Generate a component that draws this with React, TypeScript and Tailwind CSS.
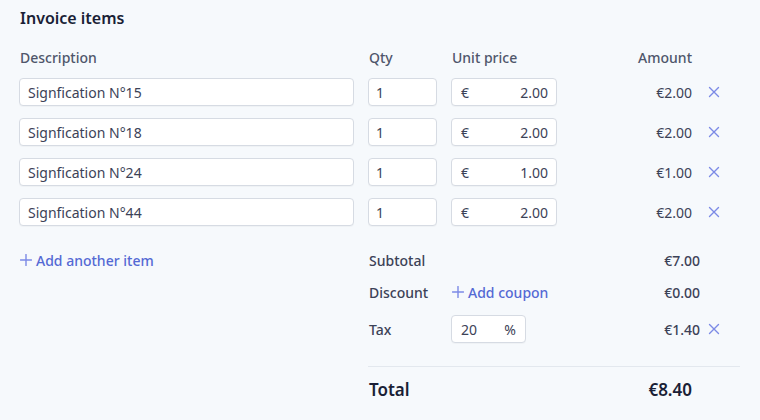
import React from "react";

const font = { fontFamily: '"Noto Sans", "Open Sans", sans-serif' };

function XIcon() {
  return (
    <svg width="12" height="12" viewBox="0 0 12 12" className="block">
      <path d="M1.5 1.5 L10.5 10.5 M10.5 1.5 L1.5 10.5" stroke="#7c8ae6" strokeWidth="1.4" strokeLinecap="round" fill="none" />
    </svg>
  );
}

function PlusIcon() {
  return (
    <svg width="12" height="12" viewBox="0 0 12 12" className="block">
      <path d="M6 0.5 V11.5 M0.5 6 H11.5" stroke="#7c8ae6" strokeWidth="1.4" strokeLinecap="round" fill="none" />
    </svg>
  );
}

const rows = [
  { d: "Signfication N°15", q: "1", p: "2.00", a: "€2.00" },
  { d: "Signfication N°18", q: "1", p: "2.00", a: "€2.00" },
  { d: "Signfication N°24", q: "1", p: "1.00", a: "€1.00" },
  { d: "Signfication N°44", q: "1", p: "2.00", a: "€2.00" },
];

const inputBox =
  "h-[28px] bg-white border border-[#d6dbe3] rounded-[4px] flex items-center text-[14px] text-[#3c4257] shadow-[0_1px_1px_rgba(0,0,0,0.03)]";

const headCls = "h-[20px] leading-[24px] text-[14px] font-medium text-[#4f566b]";

export default function App() {
  return (
    <div className="w-[760px] h-[420px] bg-[#f6f9fc] overflow-hidden pl-[19px] pt-[6px]" style={font}>
      <div className="h-[24px] leading-[24px] text-[16px] font-semibold text-[#1a1f36] pl-[1px]">Invoice items</div>

      <div className="mt-[16px] grid grid-cols-[335px_69px_106px_121px_auto] gap-x-[14px] gap-y-[12px] items-center">
        <div className={headCls + " pl-[1px]"}>Description</div>
        <div className={headCls + " pl-[1px]"}>Qty</div>
        <div className={headCls + " pl-[1px]"}>Unit price</div>
        <div className={headCls + " text-right"}>Amount</div>
        <div />
        {rows.map((r, i) => (
          <React.Fragment key={i}>
            <div className={inputBox + " pl-[8px]"}>{r.d}</div>
            <div className={inputBox + " pl-[7px]"}>{r.q}</div>
            <div className={inputBox + " pl-[9px] pr-[8px] justify-between"}>
              <span>€</span>
              <span>{r.p}</span>
            </div>
            <div className="text-[14px] text-[#3c4257] text-right">{r.a}</div>
            <div className="pl-[2px]">
              <XIcon />
            </div>
          </React.Fragment>
        ))}
      </div>

      <div className="flex mt-[24px]">
        <div className="w-[349px] pl-[1px]">
          <div className="h-[20px] flex items-center gap-[4px] text-[14px] font-medium text-[#5469d4]">
            <PlusIcon />
            <span>Add another item</span>
          </div>
        </div>
        <div className="w-[372px]">
          <div className="h-[20px] flex items-center text-[14px] font-medium text-[#3c4257]">
            <div className="w-[83px] pl-[1px]">Subtotal</div>
            <div className="flex-1" />
            <div className="text-right">€7.00</div>
            <div className="w-[40px]" />
          </div>
          <div className="mt-[12px] h-[20px] flex items-center text-[14px] font-medium text-[#3c4257]">
            <div className="w-[83px] pl-[1px]">Discount</div>
            <div className="flex-1 flex items-center gap-[4px] text-[#5469d4] pl-[1px]">
              <PlusIcon />
              <span>Add coupon</span>
            </div>
            <div className="text-right">€0.00</div>
            <div className="w-[40px]" />
          </div>
          <div className="mt-[13px] h-[28px] flex items-center text-[14px] font-medium text-[#3c4257]">
            <div className="w-[83px] pl-[1px]">Tax</div>
            <div className="flex-1">
              <div className={inputBox + " w-[75px] pl-[9px] pr-[9px] justify-between font-normal"}>
                <span>20</span>
                <span>%</span>
              </div>
            </div>
            <div className="text-right">€1.40</div>
            <div className="w-[40px] pl-[8px]">
              <XIcon />
            </div>
          </div>
          <div className="mt-[23px] h-px bg-[#e3e8ee]" />
          <div className="mt-[11px] h-[24px] flex items-center text-[17px] font-semibold text-[#1a1f36]">
            <div className="flex-1 pl-[1px]">Total</div>
            <div className="text-right">€8.40</div>
            <div className="w-[48px]" />
          </div>
        </div>
      </div>
    </div>
  );
}
